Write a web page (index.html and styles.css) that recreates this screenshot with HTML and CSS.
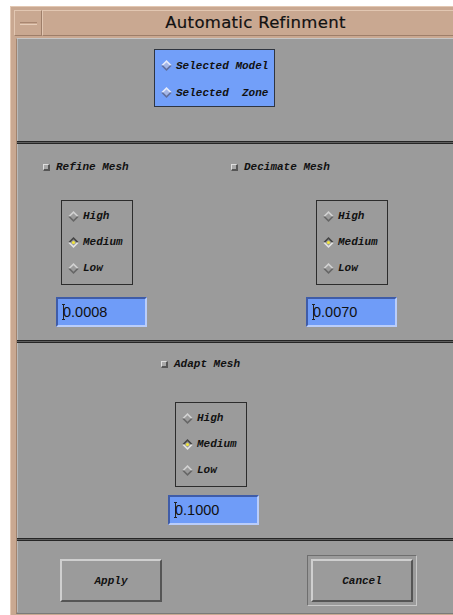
FILE: index.html
```html
<!DOCTYPE html>
<html lang="en">
<head>
    <meta charset="UTF-8">
    <meta name="viewport" content="width=device-width, initial-scale=1.0">
    <title>Automatic Refinment</title>
    <link rel="stylesheet" href="styles.css">
</head>
<body>
    <div class="window">
        <div class="titlebar">
            <div class="menu-btn"><span class="dash"></span></div>
            <div class="title">Automatic Refinment</div>
        </div>

        <div class="content">

            <!-- seleccion -->
            <div class="section sec-select">
                <div class="select-box">
                    <div class="row">
                        <svg class="dia" width="11" height="11" viewBox="0 0 10 10"><polygon points="0,5 5,0 10,5" fill="#e6ecfa"/><polygon points="0,5 5,10 10,5" fill="#5f6f9c"/><polygon points="2,5 5,2 8,5 5,8" fill="#a4b6e6"/></svg>
                        <span>Selected Model</span>
                    </div>
                    <div class="row">
                        <svg class="dia" width="11" height="11" viewBox="0 0 10 10"><polygon points="0,5 5,0 10,5" fill="#e6ecfa"/><polygon points="0,5 5,10 10,5" fill="#5f6f9c"/><polygon points="2,5 5,2 8,5 5,8" fill="#a4b6e6"/></svg>
                        <span>Selected&nbsp;&nbsp;Zone</span>
                    </div>
                </div>
            </div>
            <div class="sep"></div>

            <!-- refine / decimate -->
            <div class="section sec-mesh">
                <div class="col col-refine">
                    <div class="check"><span class="box"></span>Refine Mesh</div>
                    <div class="radio-box">
                        <div class="row"><svg class="dia" width="11" height="11" viewBox="0 0 10 10"><polygon points="0,5 5,0 10,5" fill="#d2d2d2"/><polygon points="0,5 5,10 10,5" fill="#666"/><polygon points="2,5 5,2 8,5 5,8" fill="#9b9b9b"/></svg>High</div>
                        <div class="row"><svg class="dia" width="11" height="11" viewBox="0 0 10 10"><polygon points="0,5 5,0 10,5" fill="#444"/><polygon points="0,5 5,10 10,5" fill="#e4e4e4"/><polygon points="2,5 5,2 8,5 5,8" fill="#9b9b9b"/><circle cx="5" cy="5" r="1.4" fill="#f2e63a"/></svg>Medium</div>
                        <div class="row"><svg class="dia" width="11" height="11" viewBox="0 0 10 10"><polygon points="0,5 5,0 10,5" fill="#d2d2d2"/><polygon points="0,5 5,10 10,5" fill="#666"/><polygon points="2,5 5,2 8,5 5,8" fill="#9b9b9b"/></svg>Low</div>
                    </div>
                    <div class="field"><span class="caret"></span>0.0008</div>
                </div>
                <div class="col col-decimate">
                    <div class="check"><span class="box"></span>Decimate Mesh</div>
                    <div class="radio-box">
                        <div class="row"><svg class="dia" width="11" height="11" viewBox="0 0 10 10"><polygon points="0,5 5,0 10,5" fill="#d2d2d2"/><polygon points="0,5 5,10 10,5" fill="#666"/><polygon points="2,5 5,2 8,5 5,8" fill="#9b9b9b"/></svg>High</div>
                        <div class="row"><svg class="dia" width="11" height="11" viewBox="0 0 10 10"><polygon points="0,5 5,0 10,5" fill="#444"/><polygon points="0,5 5,10 10,5" fill="#e4e4e4"/><polygon points="2,5 5,2 8,5 5,8" fill="#9b9b9b"/><circle cx="5" cy="5" r="1.4" fill="#f2e63a"/></svg>Medium</div>
                        <div class="row"><svg class="dia" width="11" height="11" viewBox="0 0 10 10"><polygon points="0,5 5,0 10,5" fill="#d2d2d2"/><polygon points="0,5 5,10 10,5" fill="#666"/><polygon points="2,5 5,2 8,5 5,8" fill="#9b9b9b"/></svg>Low</div>
                    </div>
                    <div class="field"><span class="caret"></span>0.0070</div>
                </div>
            </div>
            <div class="sep"></div>

            <!-- adapt -->
            <div class="section sec-adapt">
                <div class="col col-adapt">
                    <div class="check"><span class="box"></span>Adapt Mesh</div>
                    <div class="radio-box">
                        <div class="row"><svg class="dia" width="11" height="11" viewBox="0 0 10 10"><polygon points="0,5 5,0 10,5" fill="#d2d2d2"/><polygon points="0,5 5,10 10,5" fill="#666"/><polygon points="2,5 5,2 8,5 5,8" fill="#9b9b9b"/></svg>High</div>
                        <div class="row"><svg class="dia" width="11" height="11" viewBox="0 0 10 10"><polygon points="0,5 5,0 10,5" fill="#444"/><polygon points="0,5 5,10 10,5" fill="#e4e4e4"/><polygon points="2,5 5,2 8,5 5,8" fill="#9b9b9b"/><circle cx="5" cy="5" r="1.4" fill="#f2e63a"/></svg>Medium</div>
                        <div class="row"><svg class="dia" width="11" height="11" viewBox="0 0 10 10"><polygon points="0,5 5,0 10,5" fill="#d2d2d2"/><polygon points="0,5 5,10 10,5" fill="#666"/><polygon points="2,5 5,2 8,5 5,8" fill="#9b9b9b"/></svg>Low</div>
                    </div>
                    <div class="field"><span class="caret"></span>0.1000</div>
                </div>
            </div>
            <div class="sep"></div>

            <!-- botones -->
            <div class="section sec-buttons">
                <div class="btn btn-apply">Apply</div>
                <div class="default-ring">
                    <div class="btn">Cancel</div>
                </div>
            </div>
        </div>
    </div>
</body>
</html>
```

FILE: styles.css
```css
* {
    box-sizing: border-box;
}

html, body {
    height: 615px;
    overflow: hidden;
}

body {
    margin: 0;
    background-color: #ffffff;
    font-family: "Liberation Mono", monospace;
}

.window {
    width: 458px;
    height: 609px;
    margin: 6px 0 0 10px;
    padding: 3px 0 0 3px;
    background-color: #c9a891;
    border-top: 1px solid #e2c7b2;
    border-left: 1px solid #e2c7b2;
}

/* barra de titulo */
.titlebar {
    display: flex;
    height: 26px;
}

.menu-btn {
    width: 28px;
    border-top: 1px solid #e2c7b2;
    border-left: 1px solid #e2c7b2;
    border-right: 1px solid #9e7e69;
    border-bottom: 1px solid #9e7e69;
    display: flex;
    align-items: center;
    justify-content: center;
}

.dash {
    width: 17px;
    height: 3px;
    border-top: 1px solid #a88670;
    border-bottom: 1px solid #e6cdb9;
    background-color: #c9a891;
}

.title {
    flex: 1;
    border-top: 1px solid #e2c7b2;
    border-left: 1px solid #e2c7b2;
    border-bottom: 1px solid #9e7e69;
    font-family: "DejaVu Sans", sans-serif;
    font-size: 16.5px;
    font-weight: 500;
    color: #111;
    text-align: center;
    line-height: 24px;
    letter-spacing: 0.3px;
    -webkit-text-stroke: 0.2px #111;
}

/* contenido gris */
.content {
    margin: 2px 0 0 2px;
    border-left: 1px solid #a2846f;
    border-top: 1px solid #c6c6c6;
    background-color: #9b9b9b;
    height: 576px;
    border-bottom: 1px solid #7a7a7a;
}

.section {
    border-left: 1px solid #b8b8b8;
}

.sep {
    height: 3px;
    border-top: 1px solid #262626;
    border-bottom: 1px solid #262626;
    background-color: #5e5e5e;
}

.sec-select {
    height: 102px;
    padding-top: 10px;
}

.select-box {
    width: 121px;
    height: 58px;
    margin-left: 136px;
    padding: 2px 0 0 6px;
    background-color: #729ff9;
    border: 1px solid #2f3540;
}

.select-box .row {
    height: 27px;
}

.row {
    display: flex;
    align-items: center;
    gap: 4px;
    font-size: 11px;
    font-weight: bold;
    font-style: italic;
    color: #111;
    white-space: nowrap;
}

.dia {
    flex-shrink: 0;
}

/* secciones de malla */
.sec-mesh {
    height: 196px;
    display: flex;
}

.sec-adapt {
    height: 195px;
}

.col {
    display: flex;
    flex-direction: column;
    align-items: flex-start;
}

.col-refine {
    width: 213px;
    padding-left: 25px;
}

.col-adapt {
    padding-left: 143px;
}

.check {
    display: flex;
    align-items: center;
    gap: 6px;
    height: 14px;
    margin-top: 16px;
    font-size: 11px;
    font-weight: bold;
    font-style: italic;
    color: #111;
    white-space: nowrap;
}

.sec-adapt .check {
    margin-top: 14px;
}

.box {
    width: 7px;
    height: 7px;
    background-color: #a8a8a8;
    border-top: 1px solid #dedede;
    border-left: 1px solid #dedede;
    border-right: 2px solid #555;
    border-bottom: 2px solid #555;
}

.radio-box {
    width: 72px;
    height: 85px;
    margin-top: 26px;
    margin-left: 18px;
    padding: 2px 0 0 6px;
    border: 1px solid #2c2c2c;
}

.radio-box .row {
    height: 26px;
}

.col-decimate .radio-box {
    margin-left: 85px;
}

.col-adapt .radio-box {
    margin-top: 31px;
    margin-left: 14px;
}

.field {
    width: 91px;
    height: 30px;
    margin-top: 12px;
    margin-left: 13px;
    padding-left: 4px;
    display: flex;
    align-items: center;
    background-color: #6f9cf8;
    border-top: 2px solid #3f5ca8;
    border-left: 2px solid #3f5ca8;
    border-right: 2px solid #b9cdfb;
    border-bottom: 2px solid #b9cdfb;
    font-family: "Liberation Sans", Arial, sans-serif;
    font-size: 14.5px;
    color: #101010;
}

.col-decimate .field {
    margin-left: 75px;
}

.col-adapt .field {
    margin-top: 8px;
    margin-left: 7px;
}

.caret {
    width: 3px;
    height: 16px;
    margin-right: -2px;
    border-top: 1px solid #222;
    border-bottom: 1px solid #222;
    background: linear-gradient(to right, transparent 1px, #222 1px, #222 2px, transparent 2px);
}

/* botones */
.sec-buttons {
    display: flex;
    align-items: flex-start;
    height: 71px;
}

.btn {
    width: 102px;
    height: 43px;
    display: flex;
    align-items: center;
    justify-content: center;
    border-top: 2px solid #cfcfcf;
    border-left: 2px solid #cfcfcf;
    border-right: 2px solid #555;
    border-bottom: 2px solid #555;
    font-size: 11px;
    font-weight: bold;
    font-style: italic;
    color: #111;
}

.btn-apply {
    margin: 18px 0 0 42px;
}

.default-ring {
    margin: 14px 0 0 145px;
    padding: 3px;
    border-top: 1px solid #6e6e6e;
    border-left: 1px solid #6e6e6e;
    border-right: 1px solid #c8c8c8;
    border-bottom: 1px solid #c8c8c8;
}
```
